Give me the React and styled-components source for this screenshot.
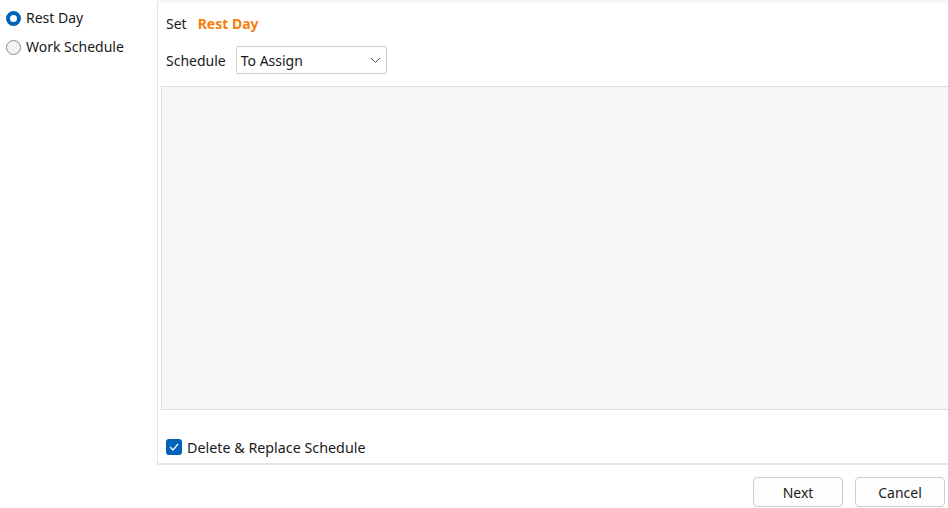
import React from "react";
import styled, { createGlobalStyle } from "styled-components";

const Global = createGlobalStyle`
  html, body { margin: 0; padding: 0; background: #ffffff; }
  body { font-family: "Noto Sans", "Open Sans", sans-serif; font-size: 14px; color: #1a1a1a; }
  * { box-sizing: border-box; }
`;

const Page = styled.div`
  width: 948px;
  height: 508px;
  display: flex;
  flex-direction: column;
  overflow: hidden;
`;

const Main = styled.div`
  display: flex;
  height: 465px;
`;

const Sidebar = styled.div`
  width: 157px;
  flex: none;
  display: flex;
  flex-direction: column;
  gap: 9px;
  padding: 8px 0 0 6px;
`;

const RadioRow = styled.label`
  display: flex;
  align-items: center;
  gap: 5px;
  height: 20px;
  line-height: 20px;
`;

const RadioDot = styled.span`
  width: 15px;
  height: 15px;
  border-radius: 50%;
  flex: none;
  border: ${p => (p.$checked ? "4px solid #0062b8" : "1px solid #8a8a8a")};
  background: ${p => (p.$checked ? "#ffffff" : "#f3f3f3")};
`;

const Panel = styled.div`
  flex: 1;
  display: flex;
  flex-direction: column;
  border-left: 1px solid #e3e3e3;
  border-bottom: 2px solid #e6e6e6;
  border-top: 3px solid #f7f7f7;
  padding: 0 0 0 3px;
`;

const Row = styled.div`
  display: flex;
  align-items: center;
  padding-left: 5px;
  height: ${p => p.$h}px;
`;

const Label = styled.span`
  margin-right: ${p => p.$gap}px;
`;

const Accent = styled.span`
  color: #f7800a;
  font-weight: 700;
`;

const Select = styled.div`
  width: 151px;
  height: 28px;
  border: 1px solid #cfcfcf;
  border-radius: 2px;
  display: flex;
  align-items: center;
  justify-content: space-between;
  padding: 0 5px 0 4px;
  background: #fff;
`;

const ContentBox = styled.div`
  height: 324px;
  margin-top: 9px;
  background: #f7f7f7;
  border: 1px solid #dedede;
  border-right: none;
`;

const CheckRow = styled.label`
  display: flex;
  align-items: center;
  gap: 5px;
  padding-left: 5px;
  margin-top: 27px;
  height: 20px;
  font-size: 14.3px;
`;

const CheckBox = styled.span`
  width: 16px;
  height: 16px;
  border-radius: 3px;
  background: #0062b8;
  display: flex;
  align-items: center;
  justify-content: center;
  flex: none;
`;

const Footer = styled.div`
  display: flex;
  justify-content: flex-end;
  gap: 12px;
  padding: 12px 3px 0 0;
`;

const Button = styled.button`
  width: 90px;
  height: 30px;
  border: 1px solid #cccccc;
  border-radius: 4px;
  background: #fdfdfd;
  font-family: "Noto Sans", "Open Sans", sans-serif;
  font-size: 14px;
  color: #1a1a1a;
  padding: 0;
`;

export default function App() {
  return (
    <>
      <Global />
      <Page>
        <Main>
          <Sidebar>
            <RadioRow><RadioDot $checked />Rest Day</RadioRow>
            <RadioRow><RadioDot />Work Schedule</RadioRow>
          </Sidebar>
          <Panel>
            <Row $h={40}>
              <Label $gap={11}>Set</Label>
              <Accent>Rest Day</Accent>
            </Row>
            <Row $h={34}>
              <Label $gap={10}>Schedule</Label>
              <Select>
                <span>To Assign</span>
                <svg width="11" height="7" viewBox="0 0 11 7">
                  <path d="M1 1 L5.5 5.5 L10 1" fill="none" stroke="#555" strokeWidth="1" />
                </svg>
              </Select>
            </Row>
            <ContentBox />
            <CheckRow>
              <CheckBox>
                <svg width="10" height="8" viewBox="0 0 10 8">
                  <path d="M1 4 L4 7 L9 1" fill="none" stroke="#fff" strokeWidth="1.2" />
                </svg>
              </CheckBox>
              Delete &amp; Replace Schedule
            </CheckRow>
          </Panel>
        </Main>
        <Footer>
          <Button>Next</Button>
          <Button>Cancel</Button>
        </Footer>
      </Page>
    </>
  );
}
